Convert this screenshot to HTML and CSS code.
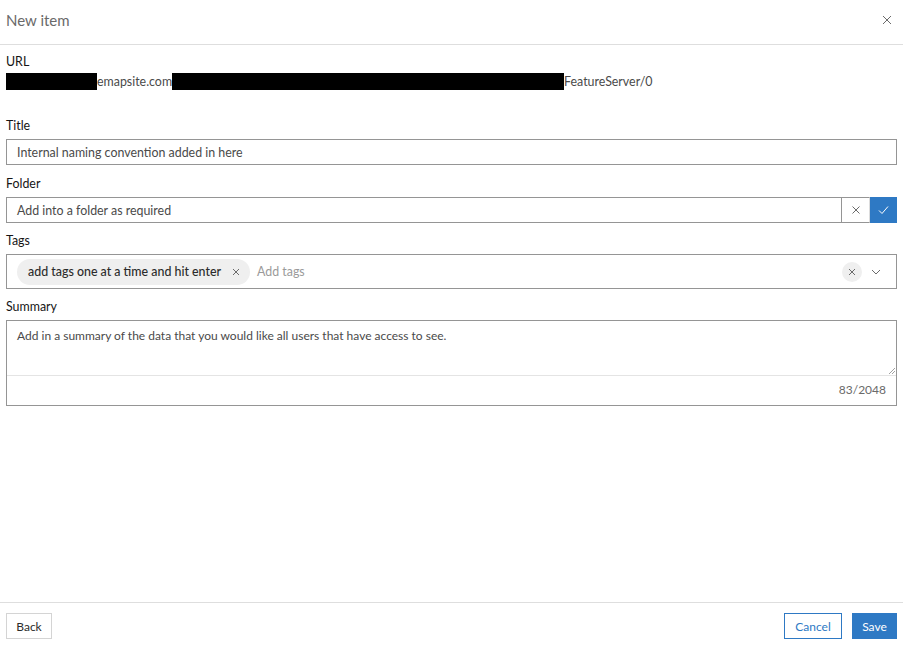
FILE: index.html
```html
<!DOCTYPE html>
<html lang="en">
<head>
<meta charset="utf-8">
<title>New item</title>
<link rel="stylesheet" href="styles.css">
</head>
<body>
<div class="dialog">
  <header class="header">
    <h1 class="heading">New item</h1>
    <button class="close" aria-label="Close">
      <svg width="10" height="10" viewBox="0 0 10 10"><path d="M1 1L9 9M9 1L1 9" stroke="#6b6b6b" stroke-width="1" fill="none"/></svg>
    </button>
  </header>
  <main class="content">
    <div class="label">URL</div>
    <div class="url-row">
      <span class="redact r1"></span><span class="url-text">emapsite.com</span><span class="redact r2"></span><span class="url-text">FeatureServer/0</span>
    </div>

    <div class="label gap-lg">Title</div>
    <div class="input">Internal naming convention added in here</div>

    <div class="label">Folder</div>
    <div class="folder-row">
      <div class="input grow">Add into a folder as required</div>
      <button class="icon-btn clear-btn" aria-label="Clear">
        <svg width="10" height="10" viewBox="0 0 10 10"><path d="M1.5 1.5L8.5 8.5M8.5 1.5L1.5 8.5" stroke="#6b6b6b" stroke-width="1" fill="none"/></svg>
      </button>
      <button class="icon-btn ok-btn" aria-label="Confirm">
        <svg width="11" height="10" viewBox="0 0 11 10"><path d="M1 5.5L4 8.5L10 1.5" stroke="#ffffff" stroke-width="1" fill="none"/></svg>
      </button>
    </div>

    <div class="label">Tags</div>
    <div class="tags-box">
      <span class="chip">add tags one at a time and hit enter
        <svg class="chip-x" width="8" height="8" viewBox="0 0 8 8"><path d="M1 1L7 7M7 1L1 7" stroke="#6b6b6b" stroke-width="1" fill="none"/></svg>
      </span>
      <span class="placeholder">Add tags</span>
      <span class="tags-spacer"></span>
      <span class="clear-circle">
        <svg width="8" height="8" viewBox="0 0 8 8"><path d="M1 1L7 7M7 1L1 7" stroke="#6b6b6b" stroke-width="1" fill="none"/></svg>
      </span>
      <span class="chevron">
        <svg width="10" height="6" viewBox="0 0 10 6"><path d="M1 1L5 5L9 1" stroke="#6b6b6b" stroke-width="1" fill="none"/></svg>
      </span>
    </div>

    <div class="label">Summary</div>
    <div class="summary">
      <div class="summary-text">Add in a summary of the data that you would like all users that have access to see.
        <svg class="grip" width="7" height="7" viewBox="0 0 7 7"><path d="M1 7L7 1M4 7L7 4" stroke="#8a8a8a" stroke-width="0.8" fill="none"/></svg>
      </div>
      <div class="summary-count">83/2048</div>
    </div>
  </main>
  <footer class="footer">
    <button class="btn btn-back">Back</button>
    <div class="footer-right">
      <button class="btn btn-cancel">Cancel</button>
      <button class="btn btn-save">Save</button>
    </div>
  </footer>
</div>
</body>
</html>
```

FILE: styles.css
```css
* { box-sizing: border-box; }
html, body { margin: 0; padding: 0; height: 100%; background: #ffffff; }
body {
  font-family: "Lato", "Noto Sans", "Liberation Sans", sans-serif;
  font-size: 12.4px;
  color: #4a4a4a;
}
.dialog {
  display: flex;
  flex-direction: column;
  height: 645px;
}
.header {
  height: 45px;
  flex: none;
  display: flex;
  align-items: center;
  justify-content: space-between;
  border-bottom: 1px solid #dedede;
  padding: 0 10px 4px 6px;
}
.heading {
  margin: 0;
  font-size: 15px;
  font-weight: 400;
  color: #6a6a6a;
}
.close {
  background: none;
  border: 0;
  padding: 0;
  width: 12px;
  height: 12px;
  display: flex;
  align-items: center;
  justify-content: center;
}
.content {
  flex: 1;
  padding: 8px 6px 0 6px;
}
.label {
  font-size: 12.4px;
  line-height: 16px;
  color: #151515;
  font-weight: 400;
  padding-top: 1px;
  margin-bottom: 5px;
}
.label.gap-lg { margin-top: 27px; }
.url-row {
  display: flex;
  align-items: center;
  height: 18px;
  margin-top: -3px;
  color: #4a4a4a;
}
.redact { display: inline-block; height: 17px; background: #000; }
.r1 { width: 91px; }
.r2 { width: 392px; }
.url-text { line-height: 17px; }
.input {
  height: 26px;
  border: 1px solid #959595;
  padding: 0 10px;
  display: flex;
  align-items: center;
  color: #4a4a4a;
  margin-bottom: 10px;
}
.folder-row {
  display: flex;
  height: 26px;
  margin-bottom: 9px;
}
.folder-row .input { margin-bottom: 0; }
.grow { flex: 1; }
.icon-btn {
  width: 28px;
  height: 26px;
  border: 0;
  padding: 0;
  display: flex;
  align-items: center;
  justify-content: center;
}
.clear-btn {
  background: #fff;
  border-top: 1px solid #959595;
  border-bottom: 1px solid #959595;
  border-right: 1px solid #dcdcdc;
}
.ok-btn { background: #2e79c4; width: 27px; }
.tags-box {
  height: 35px;
  border: 1px solid #959595;
  display: flex;
  align-items: center;
  padding: 0 6px 0 10px;
  margin-bottom: 9px;
}
.chip {
  display: inline-flex;
  align-items: center;
  height: 26px;
  border-radius: 13px;
  background: #efefef;
  padding: 0 10px 0 11px;
  font-weight: 500;
  color: #2b2b2b;
}
.chip-x { margin-left: 11px; }
.placeholder { margin-left: 7px; color: #9a9a9a; }
.tags-spacer { flex: 1; }
.clear-circle {
  width: 20px;
  height: 20px;
  border-radius: 50%;
  background: #efefef;
  display: flex;
  align-items: center;
  justify-content: center;
}
.chevron {
  width: 28px;
  display: flex;
  justify-content: center;
}
.summary {
  border: 1px solid #959595;
}
.summary-text {
  position: relative;
  height: 55px;
  padding: 7px 10px;
  font-size: 12px;
  color: #4a4a4a;
  border-bottom: 1px solid #e4e4e4;
}
.grip { position: absolute; right: 1px; bottom: 1px; }
.summary-count {
  height: 29px;
  display: flex;
  align-items: center;
  justify-content: flex-end;
  padding-right: 10px;
  padding-bottom: 2px;
  color: #6a6a6a;
  font-size: 12px;
}
.footer {
  flex: none;
  border-top: 1px solid #dedede;
  padding: 10px 6px 6px 6px;
  display: flex;
  justify-content: space-between;
}
.footer-right { display: flex; gap: 10px; }
.btn {
  height: 26px;
  font-family: inherit;
  font-size: 12px;
  padding: 0;
  border: 1px solid #d4d4d4;
  background: #fff;
  color: #2b2b2b;
}
.btn-back { width: 46px; }
.btn-cancel { width: 58px; border-color: #2e79c4; color: #2e79c4; }
.btn-save { width: 45px; border-color: #2e79c4; background: #2e79c4; color: #fff; }
```
